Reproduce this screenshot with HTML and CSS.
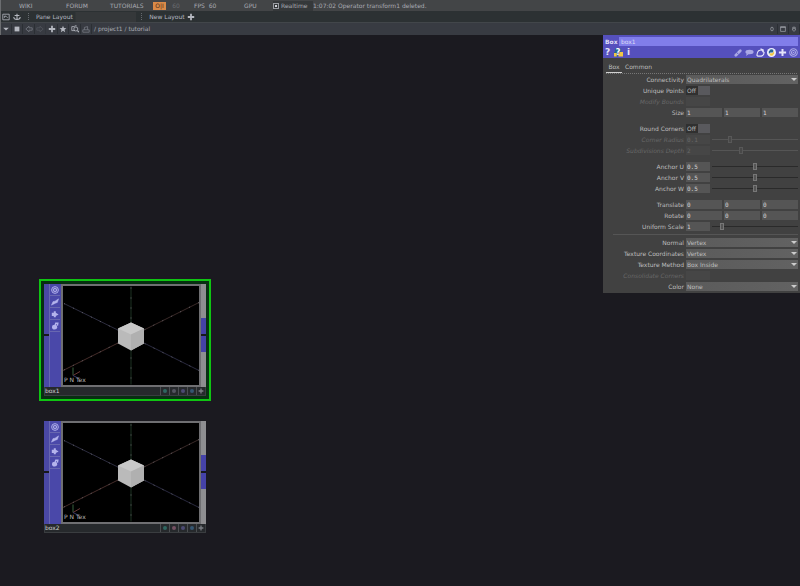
FILE: index.html
```html
<!DOCTYPE html>
<html lang="en">
<head>
<meta charset="utf-8">
<title>/project1/tutorial</title>
<link rel="stylesheet" href="styles.css">
</head>
<body>
<svg class="defs" aria-hidden="true">
  <symbol id="rings" viewBox="0 0 10 10"><g fill="none" stroke="currentColor" stroke-width="1.200"><circle cx="5" cy="5" r="4.200"/><circle cx="5" cy="5" r="2.200"/></g><circle cx="5" cy="5" r=".8" fill="currentColor"/></symbol>
  <symbol id="plus" viewBox="0 0 10 10"><path d="M5 1v8M1 5h8" stroke="currentColor" stroke-width="2.200"/></symbol>
  <symbol id="bolt" viewBox="0 0 10 10"><path d="M.5 9 2.500 4.500 5 4 9.500 1 8 5.500 5.500 6.500Z" fill="currentColor" stroke="currentColor" stroke-width=".6"/></symbol>
  <symbol id="arrow" viewBox="0 0 10 10"><path d="M1 3.500h2.500V1.500h2.500v2L9.500 5.500 6 7.500v1.500H3.500V7.500H1Z" fill="currentColor"/></symbol>
  <symbol id="lock" viewBox="0 0 10 10"><path d="M5 5 6 1.500 8.500 1.500 8 4.500" fill="none" stroke="currentColor" stroke-width="1.800"/><ellipse cx="4.500" cy="6.500" rx="3.200" ry="3" fill="currentColor"/></symbol>
  <symbol id="python" viewBox="0 0 10 10"><circle cx="5" cy="5" r="5" fill="#eef"/><path d="M2 6V4q0-1 1-1V2q2-1 4 0v2q0 1-1 1H4q-1 0-1 1Z" fill="#286790"/><path d="M8 4v2q0 1-1 1v1q-2 1-4 0V6.500q0-.8 1-.8h2q1 0 1-1.700Z" fill="#f2c744"/></symbol>
  <symbol id="scene" viewBox="0 0 136 98">
    <path d="M68 0v98" stroke="#1c3322"/>
    <path d="M1 17 68 50" stroke="#2c2c3e"/><path d="M68 50 136 84" stroke="#28283e"/>
    <path d="M136 16 68 50" stroke="#3a2a28"/><path d="M68 50 0 84" stroke="#452c2a"/>
    <path d="M68 1v97M1 17l135 67M136 16 0 84" fill="none" stroke="#77767e" stroke-width=".8" stroke-dasharray="1 9"/>
    <path d="m68 36 13 6v15l-13 7-13-7V42Z" fill="#bababa"/>
    <path d="m68 36 13 6-13 6-13-6Z" fill="#c8c8c8"/><path d="M81 42v15l-13 7V48Z" fill="#b0b0b0"/>
    <path d="M10 81v8" stroke="#38613e"/><path d="m10 89 7-4" stroke="#6a3939"/><path d="m10 89 6 3" stroke="#383865"/>
  </symbol>
</svg>

<header>
  <nav class="menu">
    <a href="#" class="wiki">WIKI</a><a href="#" class="forum">FORUM</a><a href="#" class="tutorials">TUTORIALS</a>
    <button class="power">O|I</button><button class="rate">60</button>
    <span class="fps">FPS&nbsp; 60</span><span class="gpu">GPU</span>
    <label class="realtime"><input type="checkbox" checked>Realtime</label>
    <output>1:07:02 Operator transform1 deleted.</output>
  </nav>
  <div class="layouts">
    <button aria-label="Pane type"><svg viewBox="0 0 10 10"><path d="M1 1.500h8v7H1ZM3 6V4h2l2 2" fill="none" stroke="currentColor"/></svg></button>
    <button aria-label="Save layout"><svg viewBox="0 0 10 10"><path d="M5 1v7M2 3h6M1 5q0 3 4 3t4-3" fill="none" stroke="currentColor" stroke-width="1.300"/></svg></button>
    <i class="grip"></i><button class="tab first">Pane Layout</button>
    <i class="grip"></i><button class="tab">New Layout</button>
    <button aria-label="Add layout"><svg><use href="#plus"/></svg></button>
  </div>
  <div class="path">
    <button aria-label="Pane menu"><svg viewBox="0 0 10 10"><path d="M1.500 3.500h7L5 7Z" fill="currentColor"/></svg></button>
    <button aria-label="Stop"><svg viewBox="0 0 10 10"><path d="M2 2h6v6H2Z" fill="currentColor"/></svg></button>
    <button class="dim group" aria-label="Back"><svg viewBox="0 0 10 10"><path d="M9 3.500H5V1.500L1 5l4 3.500v-2h4Z" fill="none" stroke="currentColor"/></svg></button>
    <button class="dim faint" aria-label="Forward"><svg viewBox="0 0 10 10"><path d="M1 3.500h4V1.500L9 5 5 8.500v-2H1Z" fill="none" stroke="currentColor"/></svg></button>
    <button class="group" aria-label="Add operator"><svg><use href="#plus"/></svg></button>
    <button aria-label="Bookmark"><svg viewBox="0 0 10 10"><path d="m5 1 1.200 2.800 3 .2-2.300 2 .8 3L5 7.300 2.300 9l.8-3L.8 4l3-.2Z" fill="currentColor"/></svg></button>
    <button class="group" aria-label="Find"><svg viewBox="0 0 10 10"><path d="M1 2h3l1-1h2M1 2v5h4" fill="none" stroke="currentColor"/><circle cx="6" cy="5" r="2.500" fill="none" stroke="currentColor"/><path d="m8 7 2 2" stroke="currentColor" stroke-width="1.500"/></svg></button>
    <button class="dim" aria-label="Up"><svg viewBox="0 0 10 10"><path d="M1 6h8v3H1ZM3 6V3l4-1v4" fill="none" stroke="currentColor"/></svg></button>
    <span class="crumbs">/ <a href="#">project1</a> / <a href="#">tutorial</a></span>
    <span class="window">
      <button aria-label="Link"><svg viewBox="0 0 10 10"><rect x="3" y="2" width="4" height="6" rx="2" fill="none" stroke="currentColor"/></svg></button>
      <button aria-label="Maximize"><svg viewBox="0 0 10 10"><path d="M1 1h8v8H1ZM1 2.500h8" fill="none" stroke="currentColor"/></svg></button>
      <button aria-label="Close pane"><svg viewBox="0 0 10 10"><path d="M3 4V2h4v2M2.500 4.500h5v2L5 9 2.500 6.500Z" fill="none" stroke="currentColor"/></svg></button>
    </span>
  </div>
</header>

<main>
  <article class="node box1 selected">
    <div class="stage">
      <div class="port"><i></i><i></i></div>
      <div class="flags"><button aria-label="Viewer"><svg><use href="#rings"/></svg></button><button aria-label="Bypass"><svg><use href="#bolt"/></svg></button><button aria-label="Clone"><svg><use href="#arrow"/></svg></button><button aria-label="Lock"><svg><use href="#lock"/></svg></button></div>
      <div class="viewer"><svg><use href="#scene"/></svg><span class="attrs">P N Tex</span></div>
      <div class="out"><i></i><i></i></div>
    </div>
    <footer><span>box1</span><button class="t" aria-label="Display"></button><button class="g" aria-label="Render"></button><button class="v" aria-label="Template"></button><button class="b" aria-label="Compare"></button><button aria-label="More"><svg><use href="#plus"/></svg></button></footer>
  </article>
  <article class="node box2">
    <div class="stage">
      <div class="port"><i></i><i></i></div>
      <div class="flags"><button aria-label="Viewer"><svg><use href="#rings"/></svg></button><button aria-label="Bypass"><svg><use href="#bolt"/></svg></button><button aria-label="Clone"><svg><use href="#arrow"/></svg></button><button aria-label="Lock"><svg><use href="#lock"/></svg></button></div>
      <div class="viewer"><svg><use href="#scene"/></svg><span class="attrs">P N Tex</span></div>
      <div class="out"><i></i><i></i></div>
    </div>
    <footer><span>box2</span><button class="t" aria-label="Display"></button><button class="r" aria-label="Render"></button><button class="v" aria-label="Template"></button><button class="b" aria-label="Compare"></button><button aria-label="More"><svg><use href="#plus"/></svg></button></footer>
  </article>

  <aside>
    <div class="head">
      <div class="name"><label for="opname">Box</label><input id="opname" value="box1"></div>
      <div class="tools">
        <button class="big" aria-label="Help">?</button>
        <button class="pyhelp" aria-label="Python help"><svg viewBox="0 0 10 9"><path d="M1 0h7v4H4v5H0V4h1Z" fill="#286790"/><path d="M0 5h3v4H0ZM6 4h4v5H5V6h1Z" fill="#f2c744"/></svg><b>?</b></button>
        <button class="big" aria-label="Info">i</button>
        <span class="space"></span>
        <button class="soft" aria-label="Edit"><svg viewBox="0 0 10 10"><path d="m2 8 5-5" stroke="currentColor" stroke-width="3" stroke-linecap="round"/><path d="m3 5 2 2" stroke="#5550bd"/></svg></button>
        <button class="soft" aria-label="Comment"><svg viewBox="0 0 10 10"><ellipse cx="5" cy="4.500" rx="4.500" ry="2.500" fill="currentColor"/><path d="m2 6-1 3 3-2Z" fill="currentColor"/></svg></button>
        <button aria-label="Copy"><svg viewBox="0 0 10 10"><path d="M1 8q0-3 2-5l3-1 3 3q0 3-3 4H2Zm4-7 3 1v3" fill="none" stroke="currentColor" stroke-width="1.300"/></svg></button>
        <button aria-label="Language"><svg><use href="#python"/></svg></button>
        <button aria-label="Add"><svg><use href="#plus"/></svg></button>
        <button class="soft" aria-label="Filter"><svg><use href="#rings"/></svg></button>
      </div>
    </div>
    <div class="tabs"><button class="active">Box</button><button>Common</button></div>
    <form>
      <div class="row"><label for="conn">Connectivity</label><select id="conn"><option>Quadrilaterals</option></select></div>
      <div class="row"><label for="uniq">Unique Points</label><span class="toggle"><input type="checkbox" id="uniq"></span></div>
      <div class="row off"><label for="mod">Modify Bounds</label><span class="toggle"><input type="checkbox" id="mod" disabled></span></div>
      <div class="row gap"><label for="sx">Size</label><div class="trio"><input id="sx" value="1"><input aria-label="Size Y" value="1"><input aria-label="Size Z" value="1"></div></div>
      <div class="row"><label for="round">Round Corners</label><span class="toggle"><input type="checkbox" id="round"></span></div>
      <div class="row off"><label for="rad">Corner Radius</label><div class="slide"><input id="rad" value="0.1" disabled><input type="range" aria-label="Corner Radius" value="20" disabled></div></div>
      <div class="row off gap"><label for="sub">Subdivisions Depth</label><div class="slide"><input id="sub" value="2" disabled><input type="range" aria-label="Subdivisions Depth" value="33" disabled></div></div>
      <div class="row"><label for="au">Anchor U</label><div class="slide"><input id="au" value="0.5"><input type="range" aria-label="Anchor U slider" value="50"></div></div>
      <div class="row"><label for="av">Anchor V</label><div class="slide"><input id="av" value="0.5"><input type="range" aria-label="Anchor V slider" value="50"></div></div>
      <div class="row gap"><label for="aw">Anchor W</label><div class="slide"><input id="aw" value="0.5"><input type="range" aria-label="Anchor W slider" value="50"></div></div>
      <div class="row"><label for="tx">Translate</label><div class="trio"><input id="tx" value="0"><input aria-label="Translate Y" value="0"><input aria-label="Translate Z" value="0"></div></div>
      <div class="row"><label for="rx">Rotate</label><div class="trio"><input id="rx" value="0"><input aria-label="Rotate Y" value="0"><input aria-label="Rotate Z" value="0"></div></div>
      <div class="row"><label for="us">Uniform Scale</label><div class="slide"><input id="us" value="1"><input type="range" aria-label="Uniform Scale slider" value="10"></div></div>
      <hr>
      <div class="row"><label for="norm">Normal</label><select id="norm"><option>Vertex</option></select></div>
      <div class="row"><label for="tc">Texture Coordinates</label><select id="tc"><option>Vertex</option></select></div>
      <div class="row"><label for="tm">Texture Method</label><select id="tm"><option>Box Inside</option></select></div>
      <div class="row off"><label for="cc">Consolidate Corners</label><span class="toggle"><input type="checkbox" id="cc" disabled></span></div>
      <div class="row"><label for="col">Color</label><select id="col"><option>None</option></select></div>
    </form>
  </aside>
</main>
</body>
</html>
```
FILE: styles.css
```css
* { box-sizing: border-box; }
body {
  margin: 0;
  min-height: 100vh;
  display: flex;
  flex-direction: column;
  background: #1b1a20;
  color: #b0b1b5;
  font: 6px/10px "DejaVu Sans", "Liberation Sans", sans-serif;
}
button, input, select {
  margin: 0;
  padding: 0;
  border: 0;
  border-radius: 0;
  background: none;
  color: inherit;
  font: inherit;
  min-width: 0;
}
a { color: inherit; text-decoration: none; }
svg { display: block; width: 8px; height: 8px; }
.defs { position: absolute; width: 0; height: 0; }

header { border-left: 1px solid #6b6d70; color: #a9abb3; }
.menu, .layouts, .path { display: flex; align-items: center; white-space: nowrap; }
.menu { height: 11px; background: #434547; }
.wiki { margin-left: 18px; width: 47px; }
.forum { width: 44px; }
.tutorials { width: 43px; }
.power { width: 13px; height: 8px; line-height: 8px; background: #d98a48; color: #4a2c18; }
.rate { width: 12px; margin: 0 12px 0 4px; color: #6a6c70; }
.fps { width: 50px; }
.gpu { width: 29px; }
.realtime { display: flex; align-items: center; gap: 2px; width: 40px; height: 10px; background: #35383a; }
.realtime input {
  appearance: none;
  width: 6px;
  height: 6px;
  border: 1px solid #9a9ca2;
  background: radial-gradient(#d0d2d8 40%, #35383a 50%);
}
.layouts { height: 11px; background: #2c3133; }
.path { height: 13px; background: #383b42; border-top: 1px solid #42464a; }
.layouts button, .path button { display: flex; align-items: center; justify-content: center; height: 10px; width: 11px; border-right: 1px solid #2b2f34; color: #b5b8c0; }
.layouts .grip { width: 2px; height: 7px; margin: 0 5px; border-left: 1px dotted #65696e; }
.layouts .tab { width: 38px; border: 0; }
.layouts .first { width: 101px; padding-left: 1px; justify-content: flex-start; background: linear-gradient(90deg, #2c3133 40px, #35383a 41px); }
.path .group { margin-left: 1px; }
.path .dim { color: #777b84; }
.path .faint { opacity: .4; }
.crumbs { margin-left: 2px; flex: 1; }
.window { display: flex; }
.window svg { width: 6px; height: 6px; }

main { position: relative; flex: 1; }

/* operators placed on the network canvas */
.node { position: absolute; width: 162px; background: #303236; }
.box1 { left: 44px; top: 249px; }
.box2 { left: 44px; top: 386px; }
.selected { outline: 2px solid #0fc512; outline-offset: 3px; box-shadow: 0 0 0 3px #073011; }
.stage { display: flex; height: 103px; background: #6f6f72; }
.port, .out { display: flex; flex-direction: column; gap: 2px; width: 5px; background: #17181b; }
.port i:first-child { height: 50px; background: #4a48a5; }
.port i:last-child { flex: 1; background: #4a48a5; }
.out { background: linear-gradient(#8e8e91 50px, #17181b 50px 52px, #8e8e91 52px); padding-top: 34px; }
.out i { height: 16px; background: #4542a8; }
.flags { width: 12px; background: #4a48a9; border-left: 1px solid #6867b0; }
.flags button { display: grid; place-items: center; width: 10px; height: 12px; border-bottom: 1px solid #6867b0; color: #b4b3ec; }
.viewer { position: relative; flex: 1; margin: 2px; background: #000; }
.viewer svg { width: 100%; height: 100%; }
.attrs { position: absolute; left: 1px; bottom: 0; color: #bbb; }
.node footer { display: flex; align-items: center; height: 9px; background: #26292c; color: #d0d0d0; border: 1px solid #3a3d40; border-top: 0; }
.node footer span { flex: 1; }
.node footer button { display: grid; place-items: center; width: 9px; height: 8px; border-left: 1px solid #4b4e51; color: #7b7e84; }
.node footer button::before { content: ""; width: 4px; height: 4px; border-radius: 2px; background: currentColor; }
.node footer button:last-child::before { content: none; }
.node footer svg { width: 6px; height: 6px; }
.node footer .t { color: #2f6660; }
.node footer .g { color: #545460; }
.node footer .v { color: #4c4a73; }
.node footer .b { color: #355672; }
.node footer .r { color: #745062; }

/* parameter panel floats over the canvas */
aside { position: absolute; top: 0; right: 0; width: 197px; padding-bottom: 1px; background: #414141; color: #bebebe; }
.head { background: #5550bd; padding: 2px 2px 0; }
.name { display: flex; height: 9px; line-height: 9px; color: #dddcf5; }
.name label { width: 14px; font-weight: bold; }
.name input { flex: 1; padding-left: 2px; background: #817eea; height: 9px; }
.tools { display: flex; align-items: center; gap: 2px; height: 12px; color: #e4e3fa; }
.tools button { width: 9px; height: 11px; display: grid; place-items: center; }
.tools svg { width: 9px; height: 9px; }
.tools .big { font-size: 9px; font-weight: bold; width: 5px; }
.tools .pyhelp { position: relative; width: 10px; margin: 0 1px; }
.tools .pyhelp b { position: absolute; inset: 0; font-size: 8px; line-height: 11px; color: #fff; }
.tools .space { flex: 1; }
.tools .soft { color: #aaa8e6; }
.tabs { display: flex; gap: 1px; height: 14px; margin: 2px 3px 0; border-bottom: 1px dotted #767676; }
.tabs button { padding: 0 2px; height: 13px; line-height: 13px; }
.tabs .active { border-bottom: 1px solid #d0d0d0; width: 16px; }
.row { display: grid; grid-template-columns: 83px 1fr; height: 11px; align-items: center; padding-right: 2px; }
.row > label { text-align: right; padding-right: 2px; white-space: nowrap; }
.gap { margin-bottom: 5px; }
.row select { appearance: none; width: 100%; height: 9px; padding: 0 1px; background: linear-gradient(90deg, #5b5b5b, #626262); }
.row:has(select) { position: relative; }
.row:has(select)::after {
  content: "";
  position: absolute;
  right: 3px;
  top: 4px;
  border: 3px solid transparent;
  border-top: 3px solid #ccc;
  border-bottom: 0;
}
.trio { display: grid; grid-template-columns: repeat(3, 1fr); gap: 2px; }
.trio input, .slide input:first-child { width: 100%; height: 9px; padding-left: 1px; background: #555; font-family: "DejaVu Sans Mono", monospace; }
.trio input, .slide input:first-child:enabled { color: #d4d4d4; }
.slide { display: grid; grid-template-columns: 24px 1fr; gap: 2px; }
.slide input[type="range"] { appearance: none; width: 100%; height: 9px; background: linear-gradient(#414141 4px, #2a2a2a 4px 5px, #414141 5px); }
.slide input::-webkit-slider-thumb { appearance: none; width: 4px; height: 7px; background: #555; border: 1px solid #777; }
.toggle input { appearance: none; display: flex; width: 24px; height: 9px; line-height: 9px; background: linear-gradient(90deg, #303030 12px, #59595d 12px); }
.toggle input::before { content: "Off"; padding-left: 1px; }
.off { color: #686868; }
.off > label { font-style: italic; }
.off .toggle input, .off .slide input:first-child { background: #464646; }
.off .toggle input::before { content: ""; }
.off .slide input[type="range"] { background: linear-gradient(#414141 4px, #555 4px 5px, #414141 5px); }
.off .slide input::-webkit-slider-thumb { background: #484848; border-color: #585858; }
hr { height: 1px; margin: 2px 2px 2px 10px; border: 0; background: #555; }
```
